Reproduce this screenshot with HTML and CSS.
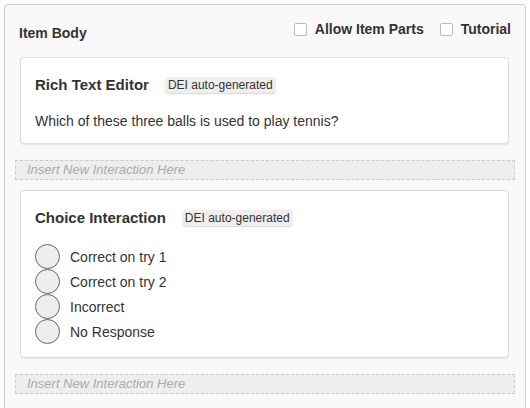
FILE: index.html
```html
<!DOCTYPE html>
<html lang="en">
<head>
    <meta charset="UTF-8">
    <title>Item Body</title>
    <link rel="stylesheet" href="styles.css">
</head>
<body>
    <div class="item-body">
        <div class="item-header">
            <h2>Item Body</h2>
            <div class="options">
                <label><input type="checkbox"> Allow Item Parts</label>
                <label><input type="checkbox"> Tutorial</label>
            </div>
        </div>

        <div class="card">
            <div class="card-title">Rich Text Editor <span class="badge">DEI auto-generated</span></div>
            <p class="prompt">Which of these three balls is used to play tennis?</p>
        </div>

        <div class="drop-zone">Insert New Interaction Here</div>

        <div class="card">
            <div class="card-title">Choice Interaction <span class="badge">DEI auto-generated</span></div>
            <ul class="choices">
                <li><span class="radio"></span>Correct on try 1</li>
                <li><span class="radio"></span>Correct on try 2</li>
                <li><span class="radio"></span>Incorrect</li>
                <li><span class="radio"></span>No Response</li>
            </ul>
        </div>

        <div class="drop-zone">Insert New Interaction Here</div>
    </div>
</body>
</html>
```

FILE: styles.css
```css
body {
    font-family: "Liberation Sans", Arial, sans-serif;
    color: #333;
    background: #fff;
    margin: 0;
    padding: 4px;
}
.item-body {
    width: 500px;
    background: #f9f9f9;
    border: 1px solid #ccc;
    border-radius: 4px;
    padding: 10px;
}
.item-header {
    display: flex;
    justify-content: space-between;
    align-items: flex-start;
    padding: 0 0 0 4px;
    height: 42px;
}
.item-header h2 {
    font-size: 14px;
    margin: 10px 0 0;
}
.options {
    display: flex;
    gap: 16px;
    margin-top: 6px;
    padding-right: 4px;
}
.options label {
    font-size: 14px;
    font-weight: bold;
    display: flex;
    align-items: center;
    gap: 8px;
}
.options input {
    width: 13px;
    height: 13px;
    margin: 0;
    appearance: none;
    border: 1px solid #bbb;
    border-radius: 2px;
    background: #fff;
}
.card {
    background: #fff;
    border: 1px solid #ddd;
    border-radius: 4px;
    box-shadow: 0 1px 1px rgba(0, 0, 0, 0.08);
    margin: 0 6px 0 5px;
    padding: 18px 14px 13px;
}
.card-title {
    font-size: 15px;
    font-weight: bold;
    display: flex;
    align-items: center;
}
.badge {
    font-size: 12px;
    font-weight: normal;
    background: #eee;
    border-radius: 4px;
    padding: 1px 3px;
    margin-left: 16px;
    box-shadow: 0 1px 1px rgba(0, 0, 0, 0.15);
}
.prompt {
    font-size: 14px;
    margin: 20px 0 1px;
}
.drop-zone {
    border: 1px dashed #ccc;
    background: #eee;
    color: #aaa;
    font-style: italic;
    font-size: 13px;
    height: 18px;
    line-height: 18px;
    padding-left: 11px;
    margin: 16px 0 10px;
}
.choices {
    list-style: none;
    margin: 18px 0 0;
    padding: 0;
}
.choices li {
    display: flex;
    align-items: center;
    font-size: 14px;
    height: 25px;
}
.radio {
    width: 23px;
    height: 23px;
    border: 1px solid #666;
    border-radius: 50%;
    background: #eee;
    margin-right: 10px;
}
```
